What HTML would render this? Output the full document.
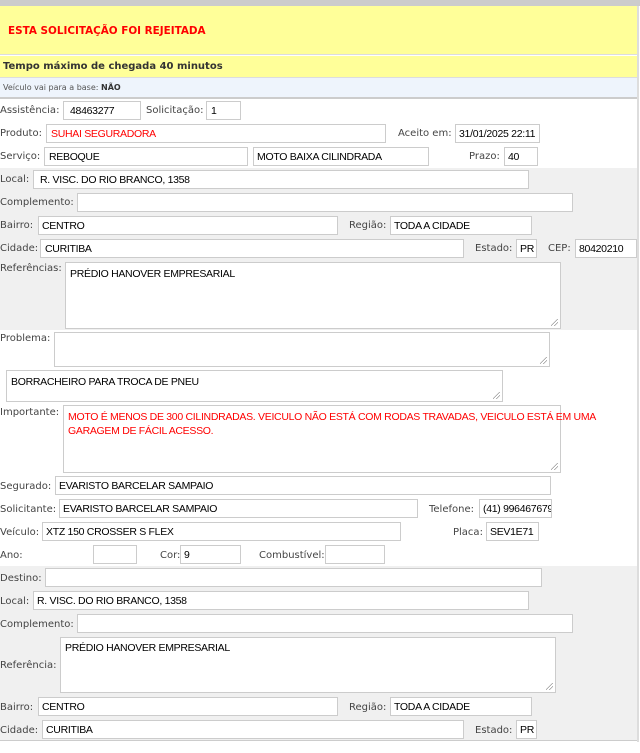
<!DOCTYPE html>
<html><head><meta charset="utf-8"><style>
*{margin:0;padding:0;box-sizing:border-box}
body{width:640px;height:753px;position:relative;background:#fff;font-family:"DejaVu Sans",Verdana,sans-serif;font-size:10px;color:#444;overflow:hidden}
.a{position:absolute}
.l{position:absolute;white-space:nowrap;line-height:12px}
.i{position:absolute;border:1px solid #ccc;background:#fff;font-family:"Liberation Sans",Arial,sans-serif;font-size:10.5px;letter-spacing:-0.3px;color:#000;padding:3px 0 0 6px;white-space:nowrap;overflow:hidden;height:19px}
.t{position:absolute;border:1px solid #ccc;background:#fff;font-family:"Liberation Sans",Arial,sans-serif;font-size:10.5px;letter-spacing:-0.3px;color:#000;padding:4px 0 0 4px;line-height:14px;white-space:nowrap}
.t:after{content:"";position:absolute;right:2px;bottom:2px;width:7px;height:7px;background:linear-gradient(135deg,transparent 45%,#999 45%,#999 52%,transparent 52%,transparent 70%,#999 70%,#999 77%,transparent 77%)}
</style></head><body>
<div class="a" style="left:0;top:0;width:640px;height:6px;background:#ccc"></div>
<div class="a" style="left:0;top:6px;width:638px;height:49px;background:#ffff99;border-bottom:1px solid #ddd"></div>
<div class="l" style="left:8px;top:25px;color:#f00;font-weight:bold;font-size:10.4px">ESTA SOLICITAÇÃO FOI REJEITADA</div>
<div class="a" style="left:0;top:56px;width:638px;height:22px;background:#ffff99;border-bottom:1px solid #ddd"></div>
<div class="l" style="left:3px;top:61px;color:#333;font-weight:bold;font-size:10px">Tempo máximo de chegada 40 minutos</div>
<div class="a" style="left:0;top:78px;width:638px;height:20px;background:#eef4fc"></div>
<div class="l" style="left:3px;top:82px;font-size:8px;color:#555">Veículo vai para a base: <b style="color:#333">NÃO</b></div>
<div class="a" style="left:0;top:97px;width:638px;height:2px;background:#ccc"></div>
<div class="a" style="left:637px;top:6px;width:2px;height:736px;background:#ddd"></div>
<div class="a" style="left:0;top:168px;width:637px;height:162px;background:#f0f0f0"></div>
<div class="a" style="left:0;top:566px;width:637px;height:175px;background:#f0f0f0;border-bottom:1px solid #ccc"></div>

<div class="l" style="left:0;top:105px">Assistência:</div><div class="i" style="left:63px;top:101px;width:78px">48463277</div>
<div class="l" style="left:146px;top:105px">Solicitação:</div><div class="i" style="left:206px;top:101px;width:35px;padding-left:4px">1</div>
<div class="l" style="left:0;top:128px">Produto:</div><div class="i" style="left:46px;top:124px;width:340px;color:#f00;padding-left:4px">SUHAI SEGURADORA</div>
<div class="l" style="left:398px;top:128px">Aceito em:</div><div class="i" style="left:455px;top:124px;width:85px;padding-left:3px">31/01/2025 22:11</div>
<div class="l" style="left:0;top:151px">Serviço:</div><div class="i" style="left:44px;top:147px;width:204px;padding-left:4px">REBOQUE</div>
<div class="i" style="left:253px;top:147px;width:176px;padding-left:3px">MOTO BAIXA CILINDRADA</div>
<div class="l" style="left:469px;top:151px">Prazo:</div><div class="i" style="left:504px;top:147px;width:34px;padding-left:3px">40</div>

<div class="l" style="left:0;top:174px">Local:</div><div class="i" style="left:33px;top:170px;width:496px">R. VISC. DO RIO BRANCO, 1358</div>
<div class="l" style="left:0;top:197px">Complemento:</div><div class="i" style="left:77px;top:193px;width:496px"></div>
<div class="l" style="left:0;top:220px">Bairro:</div><div class="i" style="left:38px;top:216px;width:300px;padding-left:3px">CENTRO</div>
<div class="l" style="left:349px;top:220px">Região:</div><div class="i" style="left:390px;top:216px;width:142px;padding-left:3px">TODA A CIDADE</div>
<div class="l" style="left:0;top:243px">Cidade:</div><div class="i" style="left:40px;top:239px;width:424px;padding-left:4px">CURITIBA</div>
<div class="l" style="left:475px;top:243px">Estado:</div><div class="i" style="left:516px;top:239px;width:21px;padding-left:3px">PR</div>
<div class="l" style="left:548px;top:243px">CEP:</div><div class="i" style="left:575px;top:239px;width:62px;padding-left:3px">80420210</div>
<div class="l" style="left:0;top:263px">Referências:</div><div class="t" style="left:65px;top:262px;width:496px;height:67px">PRÉDIO HANOVER EMPRESARIAL</div>

<div class="l" style="left:0;top:333px">Problema:</div><div class="t" style="left:54px;top:332px;width:496px;height:35px"></div>
<div class="t" style="left:6px;top:370px;width:497px;height:32px">BORRACHEIRO PARA TROCA DE PNEU</div>
<div class="l" style="left:0;top:407px">Importante:</div><div class="t" style="left:63px;top:405px;width:498px;height:68px;color:#f00">MOTO É MENOS DE 300 CILINDRADAS. VEICULO NÃO ESTÁ COM RODAS TRAVADAS, VEICULO ESTÁ EM UMA<br>GARAGEM DE FÁCIL ACESSO.</div>
<div class="l" style="left:0;top:481px">Segurado:</div><div class="i" style="left:55px;top:476px;width:496px;padding-left:3px">EVARISTO BARCELAR SAMPAIO</div>
<div class="l" style="left:0;top:504px">Solicitante:</div><div class="i" style="left:59px;top:499px;width:359px;padding-left:3px">EVARISTO BARCELAR SAMPAIO</div>
<div class="l" style="left:429px;top:504px">Telefone:</div><div class="i" style="left:479px;top:499px;width:73px;padding-left:3px">(41) 996467679</div>
<div class="l" style="left:0;top:527px">Veículo:</div><div class="i" style="left:42px;top:522px;width:359px;padding-left:3px">XTZ 150 CROSSER S FLEX</div>
<div class="l" style="left:453px;top:527px">Placa:</div><div class="i" style="left:486px;top:522px;width:53px;padding-left:3px">SEV1E71</div>
<div class="l" style="left:0;top:550px">Ano:</div><div class="i" style="left:93px;top:545px;width:44px"></div>
<div class="l" style="left:160px;top:550px">Cor:</div><div class="i" style="left:180px;top:545px;width:61px;padding-left:3px">9</div>
<div class="l" style="left:259px;top:550px">Combustível:</div><div class="i" style="left:325px;top:545px;width:60px"></div>

<div class="l" style="left:0;top:573px">Destino:</div><div class="i" style="left:45px;top:568px;width:497px"></div>
<div class="l" style="left:0;top:596px">Local:</div><div class="i" style="left:33px;top:591px;width:496px;padding-left:3px">R. VISC. DO RIO BRANCO, 1358</div>
<div class="l" style="left:0;top:619px">Complemento:</div><div class="i" style="left:77px;top:614px;width:496px"></div>
<div class="l" style="left:0;top:660px">Referência:</div><div class="t" style="left:60px;top:637px;width:496px;height:56px;padding-top:3px">PRÉDIO HANOVER EMPRESARIAL</div>
<div class="l" style="left:0;top:702px">Bairro:</div><div class="i" style="left:38px;top:697px;width:300px;padding-left:3px">CENTRO</div>
<div class="l" style="left:349px;top:702px">Região:</div><div class="i" style="left:390px;top:697px;width:142px;padding-left:3px">TODA A CIDADE</div>
<div class="l" style="left:0;top:725px">Cidade:</div><div class="i" style="left:42px;top:720px;width:422px;padding-left:3px">CURITIBA</div>
<div class="l" style="left:475px;top:725px">Estado:</div><div class="i" style="left:516px;top:720px;width:21px;padding-left:3px">PR</div>
</body></html>
